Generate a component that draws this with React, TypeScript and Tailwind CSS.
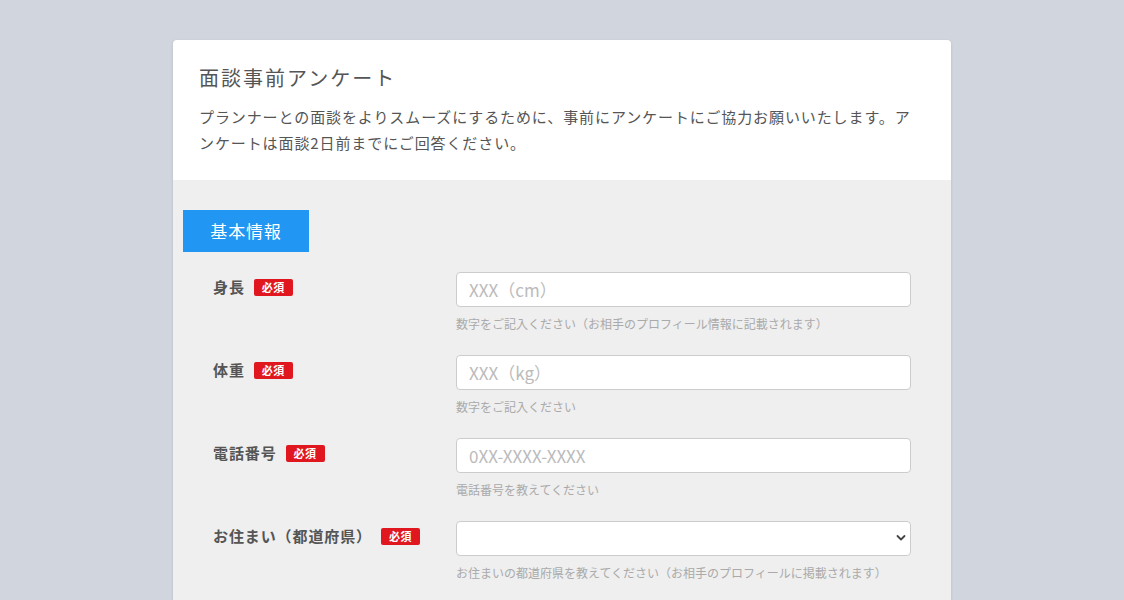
import React from 'react';

type Field = {
  label: string;
  placeholder?: string;
  help: string;
  select?: boolean;
};

const FIELDS: Field[] = [
  { label: '身長', placeholder: 'XXX（cm）', help: '数字をご記入ください（お相手のプロフィール情報に記載されます）' },
  { label: '体重', placeholder: 'XXX（kg）', help: '数字をご記入ください' },
  { label: '電話番号', placeholder: '0XX-XXXX-XXXX', help: '電話番号を教えてください' },
  { label: 'お住まい（都道府県）', help: 'お住まいの都道府県を教えてください（お相手のプロフィールに掲載されます）', select: true },
];

function RequiredBadge() {
  return (
    <span className="ml-[9px] inline-flex h-[17px] w-[39px] items-center justify-center rounded-[2px] bg-[#e0171f] text-[11px] font-bold leading-none tracking-[0.05em] text-white">
      必須
    </span>
  );
}

function FormRow({ field }: { field: Field }) {
  return (
    <div className="flex pb-[22px]">
      {/* Label */}
      <div className="flex h-[30px] w-[243px] shrink-0 items-center">
        <span className="text-[15px] font-bold tracking-[0.06em] text-[#555]">{field.label}</span>
        <RequiredBadge />
      </div>

      {/* Control */}
      <div className="flex-1">
        {field.select ? (
          <div className="relative">
            <select className="block h-[35px] w-full appearance-none rounded-[4px] border border-[#ccc] bg-white px-3 text-[16px] text-[#555] outline-none">
              <option value=""></option>
            </select>
            <svg
              className="pointer-events-none absolute right-[5px] top-[13px]"
              width="10"
              height="8"
              viewBox="0 0 10 8"
              fill="none"
            >
              <path d="M1.5 2l3.5 3.5L8.5 2" stroke="#444" strokeWidth="1.8" strokeLinecap="round" strokeLinejoin="round" />
            </svg>
          </div>
        ) : (
          <input
            type="text"
            placeholder={field.placeholder}
            className="block h-[35px] w-full rounded-[4px] border border-[#ccc] bg-white px-3 text-[17px] text-[#555] outline-none placeholder:text-[#bbb]"
          />
        )}
        <p className="mt-2 text-[12px] leading-[18px] text-[#aaa]">{field.help}</p>
      </div>
    </div>
  );
}

export default function App() {
  return (
    <div
      className="min-h-screen bg-[#d0d5de] pt-10 pb-10"
      style={{ fontFamily: '"Noto Sans CJK JP", "Noto Sans", sans-serif' }}
    >
      <div className="mx-auto w-[778px] overflow-hidden rounded-[4px] bg-white shadow-[0_1px_3px_rgba(0,0,0,0.12)]">
        {/* Header */}
        <div className="px-[26px] pt-[23px] pb-[24px]">
          <h1 className="text-[20px] leading-[30px] tracking-[0.1em] text-[#555]">面談事前アンケート</h1>
          <p className="mt-[11px] text-[15px] leading-[26px] tracking-[0.06em] text-[#555]">
            プランナーとの面談をよりスムーズにするために、事前にアンケートにご協力お願いいたします。アンケートは面談2日前までにご回答ください。
          </p>
        </div>

        {/* Body */}
        <div className="bg-[#efefef] pt-[30px] pb-10">
          <div className="px-[10px]">
            <div className="flex h-[42px] w-[126px] items-center justify-center bg-[#2196f3] text-[17px] tracking-[0.05em] text-white">
              基本情報
            </div>
          </div>

          <div className="px-10 pt-5">
            {FIELDS.map((f) => (
              <FormRow key={f.label} field={f} />
            ))}
          </div>
        </div>
      </div>
    </div>
  );
}
